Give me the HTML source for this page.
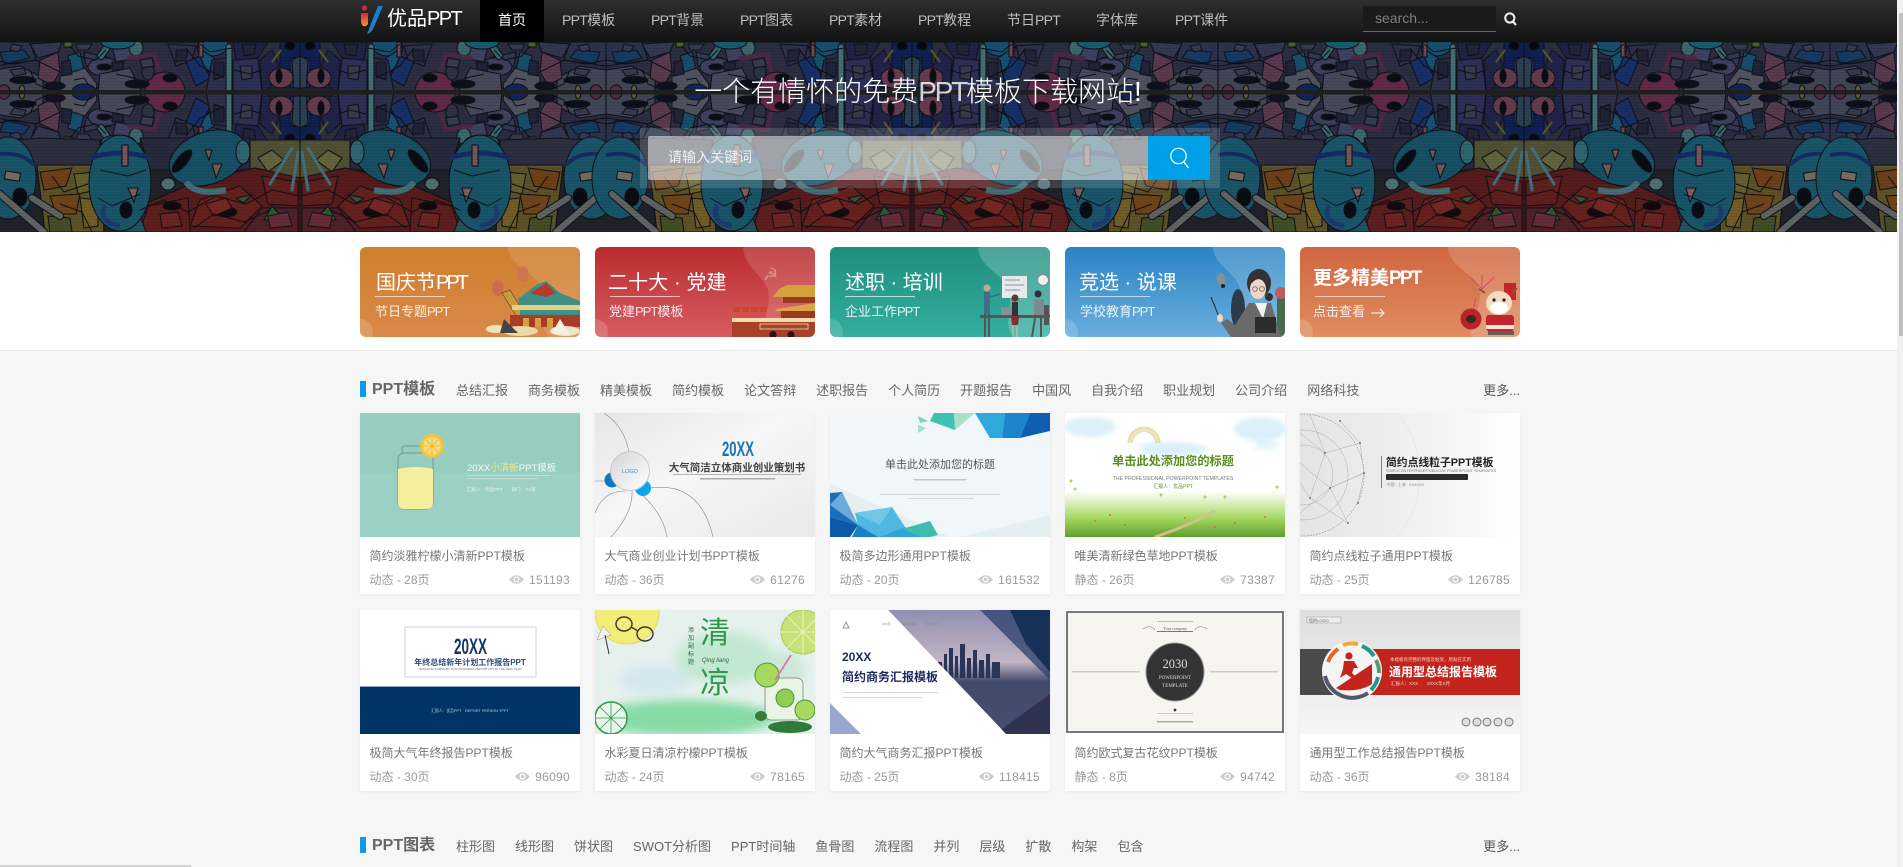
<!DOCTYPE html>
<html lang="zh">
<head>
<meta charset="utf-8">
<title>优品PPT</title>
<style>
*{margin:0;padding:0;box-sizing:border-box}
html,body{width:1903px;height:867px;overflow:hidden;background:#f6f6f6}
body{position:relative;font-family:"Liberation Sans","Noto Sans CJK SC",sans-serif;font-size:12px;color:#666}
a{color:inherit;text-decoration:none}
.abs{position:absolute}
#white{position:absolute;left:0;top:232px;width:1897px;height:119px;background:#fff;border-bottom:1px solid #e8e8e8}
#bg{position:absolute;left:0;top:351px;width:1897px;height:516px;background:#f6f6f6}
#hero{position:absolute;left:0;top:0;width:1897px;height:232px;display:block}
#nav{position:absolute;left:0;top:0;width:1897px;height:42px;background:linear-gradient(#2e2e2e,#131313)}
#nav a.i{position:absolute;top:0;height:42px;line-height:40px;font-size:14px;color:#bdbdbd;white-space:nowrap}
#nav .home{left:480px;width:64px;background:#000;color:#fff!important;text-align:center}
.n{letter-spacing:-.7px}
#logotxt{position:absolute;left:387px;top:5px;font-size:20px;line-height:28px;color:#fff;white-space:nowrap}
#logotxt span{letter-spacing:-1.6px}
#sbox{position:absolute;left:1363px;top:6px;width:133px;height:26px;background:#1a1a1a;border-bottom:1px solid #6a6a6a;color:#808080;font-size:14px;line-height:24px;padding-left:12px}
#title{position:absolute;left:618px;top:68px;width:600px;text-align:center;color:#fff;font-size:28px;line-height:48px;white-space:nowrap;font-weight:300}
#title span{letter-spacing:-2.2px;color:rgba(255,255,255,.8)}
#outer{position:absolute;left:640px;top:128px;width:580px;height:60px;background:rgba(255,255,255,.14)}
#input{position:absolute;left:648px;top:136px;width:500px;height:44px;background:rgba(255,255,255,.5);border-radius:2px 0 0 2px;color:#f2f2f2;font-size:14px;line-height:43px;padding-left:20px}
#btn{position:absolute;left:1148px;top:136px;width:62px;height:44px;background:#00a0e9;border-radius:0 2px 2px 0}
.ban{position:absolute;top:247px;width:220px;height:90px;border-radius:6px;overflow:hidden;color:#fff}
.ban svg{position:absolute;left:0;top:0}
.ban b{position:absolute;left:16px;top:21px;font-size:20px;line-height:30px;font-weight:400;white-space:nowrap}
.ban b span{letter-spacing:-3px}
.ban i{position:absolute;left:15px;top:49px;width:70px;height:1px;background:rgba(255,255,255,.65)}
.ban em{position:absolute;left:15px;top:56px;font-size:13px;line-height:18px;font-style:normal;color:rgba(255,255,255,.88);white-space:nowrap}
.ban em span{letter-spacing:-1px}
.sec{position:absolute;left:360px;width:1160px;height:16px;white-space:nowrap}
.sec:before{content:"";position:absolute;left:0;top:0;width:6px;height:16px;background:#0d9ae6}
.sec h2{position:absolute;left:12px;top:-3px;font-size:16px;line-height:24px;color:#666;font-weight:700}
.sec .tags{position:absolute;left:96px;top:0;display:flex;gap:20px;font-size:13px;line-height:20px;color:#666}
.sec .more{position:absolute;right:0;top:0;font-size:13px;line-height:20px;color:#555}
#grid{position:absolute;left:360px;top:413px;display:grid;grid-template-columns:repeat(5,220px);column-gap:15px;row-gap:16px}
.card{position:relative;width:220px;height:181px;background:#fff;box-shadow:0 1px 3px rgba(0,0,0,.06)}
.card svg.th{display:block;width:220px;height:124px}
.card p{position:absolute;left:9.5px;top:134px;font-size:12px;line-height:18px;color:#777;white-space:nowrap}
.card .m{position:absolute;left:9.5px;top:157.5px;font-size:12px;line-height:18px;color:#999;white-space:nowrap}
.card .v{position:absolute;right:10px;top:157.5px;font-size:12px;line-height:18px;color:#999;letter-spacing:.3px;display:flex;align-items:center;gap:5px}
.card .v svg{width:15px;height:11px}
#sb{position:absolute;left:1897px;top:0;width:6px;height:867px;background:#f1f1f1}
#sbt{position:absolute;left:1899px;top:13px;width:4px;height:323px;background:#c1c1c1}
#hb{position:absolute;left:0;top:865px;width:191px;height:2px;background:#d4d4d4}
</style>
</head>
<body>

<svg id="hero" width="1897" height="232" viewBox="0 0 1897 232">
<defs>
<filter id="bl" x="-30%" y="-30%" width="160%" height="160%"><feGaussianBlur stdDeviation="2.5"/></filter>
<filter id="bm" x="-30%" y="-30%" width="160%" height="160%"><feGaussianBlur stdDeviation="5"/></filter>
<pattern id="sl" width="4" height="3" patternUnits="userSpaceOnUse"><rect width="4" height="1" fill="#000" opacity=".08"/></pattern>
<g id="up" stroke="#14151f" stroke-width="1.1">
<rect x="-6" y="42" width="306" height="50" fill="#3a3b55"/>
<polygon points="-6,70 20,66 43,78 43,92 -6,92" fill="#5b5d74"/>
<polygon points="-6,42 30,42 36,60 -6,66" fill="#3d4266"/>
<polygon points="0,52 24,50 30,58 4,64" fill="#1a4f88"/>
<polygon points="40,60 58,52 60,72 52,85 38,78" fill="#7a4c68"/>
<polygon points="30,44 62,42 58,52 38,58" fill="#45496e"/>
<polygon points="68,56 80,52 84,70 72,74" fill="#1c6a92"/>
<polygon points="60,76 85,68 97,84 96,92 60,92" fill="#6f707f"/>
<polygon points="84,52 110,58 102,68 86,66" fill="#4a4c72"/>
<ellipse cx="23" cy="80" rx="13" ry="3.5" fill="#0e1019"/>
<ellipse cx="55" cy="86" rx="10" ry="4" fill="#12142a"/>
<ellipse cx="4" cy="92" rx="6" ry="7" fill="#7a3a5c"/>
<ellipse cx="22" cy="92" rx="3" ry="7" fill="#8e8230"/>
<ellipse cx="84" cy="92" rx="12" ry="8" fill="#14337a"/>
<ellipse cx="104" cy="67" rx="16" ry="9" fill="#55577c"/>
<ellipse cx="104" cy="67" rx="7" ry="3" fill="#0d0f18"/>
<polygon points="100,74 130,68 142,92 98,92" fill="#62637a"/>
<polygon points="112,46 130,44 135,58 116,62" fill="#555a80"/>
<rect x="100" y="44" width="7" height="16" rx="3" fill="#4f8f96" transform="rotate(35 103 52)"/>
<ellipse cx="136" cy="48" rx="7" ry="8" fill="#4e8f90"/>
<ellipse cx="118" cy="42" rx="17" ry="7" fill="#1c7f97"/>
<ellipse cx="213" cy="44" rx="15" ry="12" fill="#1b6f96"/>
<rect x="64" y="42" width="8" height="5" fill="#6a8a2a"/>
<polyline points="127,58 155,54 160,74" fill="none" stroke="#6c3458" stroke-width="4"/>
<polygon points="168,44 196,46 192,60 176,66" fill="#3d3f5f"/>
<polygon points="186,62 200,56 210,78 196,86" fill="#1c3f8a"/>
<polygon points="196,46 214,58 212,76 204,66" fill="#1c6f9a"/>
<polygon points="212,60 226,58 226,92 206,92" fill="#3d3f64"/>
<path d="M165,72A20,20 0 0 1 185,92L145,92A20,20 0 0 1 165,72Z" fill="#8a3560"/>
<ellipse cx="170" cy="78" rx="7" ry="4" fill="#0d0e16"/>
<ellipse cx="137" cy="84" rx="12" ry="4" fill="#0f111b"/>
<ellipse cx="148" cy="72" rx="6" ry="8" fill="#3e4458"/>
<rect x="199" y="42" width="4" height="15" fill="#a06070"/>
<rect x="226" y="44" width="6" height="48" rx="3" fill="#5a9aa0"/>
<polygon points="233,60 258,58 262,92 233,92" fill="#3c3f70"/>
<polygon points="233,42 268,42 258,58 236,60" fill="#2a2d5c"/>
<polygon points="260,60 272,50 280,68 268,92 262,92" fill="#2c2f60"/>
<rect x="280" y="42" width="20" height="30" fill="#12296e"/>
<ellipse cx="290" cy="46" rx="5" ry="4" fill="#05070f"/>
<rect x="290" y="58" width="10" height="34" fill="#1c3f7e"/>
<polygon points="292,60 300,56 300,92 294,92" fill="#3c5670"/>
<ellipse cx="281" cy="78" rx="12" ry="10" fill="#905068"/>
<ellipse cx="279" cy="76" rx="3" ry="7" fill="#0b0c14"/>
<line x1="272" y1="62" x2="281" y2="50" stroke="#7a7a30" stroke-width="2"/>
<rect x="268" y="88" width="32" height="4" fill="#2d3246"/>
<g fill="#4b4d68"><polygon points="12,44 22,46 18,52 10,50"/><polygon points="76,44 92,44 88,50 78,50"/><polygon points="140,60 152,58 154,66 142,68"/><polygon points="240,66 252,66 252,78 242,80"/><polygon points="10,70 24,68 26,74 14,76"/></g>
<g fill="#2b2d48"><polygon points="62,62 70,60 72,74 62,76"/><polygon points="112,62 124,62 122,70 112,70"/><polygon points="176,50 188,50 186,60 176,62"/><polygon points="214,62 224,62 224,76 214,80"/><polygon points="242,44 256,44 254,54 244,56"/></g>
<g fill="none" stroke="#0f1018" stroke-width="1"><polyline points="-6,60 14,64 36,60 60,72"/><polyline points="70,46 78,56 96,60 106,50"/><polyline points="116,74 134,78 142,92"/><polyline points="186,48 200,66 224,78"/><polyline points="234,70 250,74 262,70"/><polyline points="30,70 36,84 50,90"/><polyline points="74,80 84,78 92,90"/><polyline points="200,44 210,52 232,48"/></g>
</g>
<g id="half">
<rect x="-6" y="142" width="306" height="90" fill="#2c2a34"/>
<use href="#up"/>
<use href="#up" transform="matrix(1 0 0 -1 0 184)"/>
<g stroke="#15141a" stroke-width="1.1">
<polygon points="-6,142 40,138 100,140 100,170 36,170 -6,150" fill="#3d3e52"/>
<polygon points="140,138 250,138 250,170 150,170" fill="#34364e"/>
<polygon points="250,140 300,140 300,178 250,178" fill="#6f6f42"/>
<polygon points="258,158 272,150 284,160 268,172" fill="#8a8a50"/>
<polygon points="37,165 100,165 104,232 45,232" fill="#807030"/>
<polygon points="40,172 72,168 66,186 44,190" fill="#98561e"/>
<polygon points="74,174 96,172 96,190 78,194" fill="#8f8338"/>
<polygon points="50,196 80,194 76,214 56,214" fill="#9c5c1e"/>
<polygon points="80,198 98,200 98,226 84,228" fill="#a0802e"/>
<polygon points="48,216 70,218 72,232 50,232" fill="#5c6b2e"/>
<ellipse cx="8" cy="178" rx="28" ry="41" fill="#20758f"/>
<rect x="5" y="172" width="15" height="8" fill="#a89880" transform="rotate(8 12 176)"/>
<ellipse cx="20" cy="197" rx="7" ry="9" fill="#090c12"/>
<path d="M-6,155Q20,150 34,165" fill="none" stroke="#1a3c86" stroke-width="4"/>
<polygon points="128,232 140,206 200,180 255,168 300,178 300,232" fill="#782220"/>
<polygon points="200,200 240,186 262,206 240,228 190,226" fill="#8e2a22"/>
<polygon points="148,206 188,198 190,232 140,232" fill="#802822"/>
<polygon points="262,176 298,182 298,206 268,204" fill="#852824"/>
<polygon points="262,208 298,208 298,232 244,232" fill="#6f2a30"/>
<ellipse cx="226" cy="212" rx="11" ry="5" fill="#1a0808"/>
<ellipse cx="172" cy="206" rx="9" ry="4" fill="#1a0808"/>
<polygon points="272,206 285,220 264,220" fill="#3f7a3a"/>
<polygon points="236,198 252,195 243,203" fill="#3f7a3a"/>
<polygon points="124,222 140,216 146,232 120,232" fill="#2f7280"/>
<ellipse cx="120" cy="183" rx="31" ry="48" fill="#20758f"/>
<path d="M90,158Q120,148 150,158" fill="none" stroke="#1a3c86" stroke-width="5"/>
<rect x="122" y="145" width="6" height="21" fill="#a8757a"/>
<polygon points="128,188 138,188 134,202" fill="#b08080"/>
<ellipse cx="126" cy="210" rx="6" ry="8" fill="#0a0d14"/>
<path d="M105,205Q98,222 120,226" fill="none" stroke="#24509a" stroke-width="5"/>
<ellipse cx="208" cy="158" rx="40" ry="26" transform="rotate(-20 208 158)" fill="#1e6d88"/>
<ellipse cx="182" cy="161" rx="5" ry="14" transform="rotate(40 182 161)" fill="#090c12"/>
<polygon points="205,150 212,150 209,160" fill="#a87878"/>
<polygon points="212,164 222,164 216,178" fill="#a87878"/>
<ellipse cx="243" cy="152" rx="7" ry="12" fill="#3f8a9a"/>
<ellipse cx="168" cy="184" rx="7" ry="6" fill="#6e9aa0"/>
<path d="M186,182Q196,196 226,190" fill="none" stroke="#5a9aa0" stroke-width="6"/>
<polygon points="206,204 226,198 232,208 214,216" fill="#a5332a"/>
<polygon points="268,216 288,212 292,226 270,228" fill="#8e3a48"/>
<polygon points="160,214 178,212 182,226 162,228" fill="#9a2e26"/>
</g>
<g fill="none" stroke="#14100f" stroke-width="1"><polyline points="140,210 164,200 188,212 216,196 246,204 272,190 300,196"/><polyline points="194,228 214,214 244,222 270,210"/><polyline points="52,176 64,192 88,184"/><polyline points="60,204 82,212 92,232"/><polyline points="100,170 128,176 146,170"/><polyline points="98,198 112,206 140,194"/></g>
<g fill="none" stroke-linecap="round">
<line x1="0" y1="194" x2="44" y2="232" stroke="#14161c" stroke-width="8"/>
<line x1="0" y1="194" x2="44" y2="232" stroke="#858985" stroke-width="6"/>
<line x1="32" y1="198" x2="60" y2="216" stroke="#14161c" stroke-width="8"/>
<line x1="32" y1="198" x2="60" y2="216" stroke="#858985" stroke-width="6"/>
<line x1="292" y1="148" x2="270" y2="184" stroke="#5a9aa8" stroke-width="3"/>
<line x1="298" y1="152" x2="292" y2="190" stroke="#5a9aa8" stroke-width="3"/>
</g>
</g>
<g id="tile"><use href="#half"/><use href="#half" transform="matrix(-1 0 0 1 600 0)"/></g>
</defs>
<use href="#tile"/>
<use href="#tile" x="612"/>
<use href="#tile" x="1224"/>
<use href="#tile" x="1836"/>
<rect x="0" y="42" width="1897" height="190" fill="#0a0c14" opacity=".3"/>
<rect x="0" y="42" width="1897" height="190" fill="url(#sl)"/>
<rect x="0" y="90" width="1897" height="4.5" fill="#1f1f1f"/>
</svg>

<div id="white"></div>
<div id="bg"></div>

<div id="nav">
<a class="i home" href="#">首页</a>
<a class="i" style="left:562px" href="#"><span class="n">PPT</span>模板</a>
<a class="i" style="left:651px" href="#"><span class="n">PPT</span>背景</a>
<a class="i" style="left:740px" href="#"><span class="n">PPT</span>图表</a>
<a class="i" style="left:829px" href="#"><span class="n">PPT</span>素材</a>
<a class="i" style="left:918px" href="#"><span class="n">PPT</span>教程</a>
<a class="i" style="left:1007px" href="#">节日<span class="n">PPT</span></a>
<a class="i" style="left:1096px" href="#">字体库</a>
<a class="i" style="left:1175px" href="#"><span class="n">PPT</span>课件</a>
</div>
<svg class="abs" style="left:360px;top:5px" width="23" height="29" viewBox="0 0 23 29">
<defs><linearGradient id="lg" x1="0" y1="0" x2="0" y2="1"><stop offset="0" stop-color="#d8243c"/><stop offset="1" stop-color="#e89a2c"/></linearGradient></defs>
<circle cx="4.5" cy="3" r="2.6" fill="#d8243c"/>
<path d="M1,8L8,8L8,19Q6,22 3,21Q1,19 1,15Z" fill="url(#lg)"/>
<path d="M18,1L23,1L13,24Q11,28 7,29Q9,25 10,21Z" fill="#1b7fd0"/>
</svg>
<div id="logotxt">优品<span>PPT</span></div>
<div id="sbox">search...</div>
<svg class="abs" style="left:1503px;top:11px" width="15" height="16" viewBox="0 0 15 16"><circle cx="6.8" cy="7" r="4.6" fill="none" stroke="#eee" stroke-width="2"/><line x1="10" y1="10.6" x2="13" y2="14" stroke="#eee" stroke-width="2.2"/></svg>

<div id="title">一个有情怀的免费<span>PPT</span>模板下载网站!</div>
<div id="outer"></div>
<div id="input">请输入关键词</div>
<div id="btn"><svg class="abs" style="left:21px;top:10px" width="22" height="24" viewBox="0 0 22 24"><circle cx="9.5" cy="10" r="7.7" fill="none" stroke="#fff" stroke-width="1.2"/><line x1="15" y1="16" x2="19.5" y2="22" stroke="#fff" stroke-width="1.4"/></svg></div>

<!-- banners -->
<div class="ban" style="left:360px;background:linear-gradient(#cf7f2c,#d9894a)">
<svg width="220" height="90"><path d="M148,0C148,22 185,28 185,50C185,70 178,80 190,90L220,90L220,0Z" fill="#fff" opacity=".12"/><circle cx="0" cy="85" r="13" fill="#fff" opacity=".16"/>
<ellipse cx="138" cy="41" rx="5.5" ry="8" fill="#cd6a52"/><ellipse cx="163" cy="27" rx="5.5" ry="8" fill="#cf7258"/>
<polygon points="142,46 150,43 168,72 160,75" fill="#c99a3e" stroke="#5a3a20" stroke-width=".6"/><polygon points="158,52 176,38 186,34 200,46 220,54 220,60 160,60" fill="#3f8f82"/><polygon points="170,46 186,36 196,46 186,50" fill="#b43a2c"/>
<rect x="152" y="58" width="68" height="5" fill="#e4cf86"/><rect x="160" y="63" width="60" height="5" fill="#3f8f82"/><rect x="150" y="68" width="70" height="12" fill="#a83c28"/><g fill="#d7a03e"><rect x="163" y="71" width="6" height="9"/><rect x="175" y="71" width="6" height="9"/><rect x="187" y="71" width="6" height="9"/></g>
<ellipse cx="136" cy="82" rx="10" ry="4" fill="#efe3b8"/><ellipse cx="160" cy="84" rx="18" ry="5" fill="#e9d9a6"/><ellipse cx="205" cy="84" rx="15" ry="5" fill="#efe6c8"/><polygon points="200,72 210,88 192,86" fill="#f6f1e0"/><polygon points="144,72 158,86 140,86" fill="#444"/></svg>
<b>国庆节<span>PPT</span></b><i></i><em>节日专题<span>PPT</span></em></div>

<div class="ban" style="left:595px;background:linear-gradient(#b92c2e,#d75c60)">
<svg width="220" height="90"><path d="M148,0C150,24 174,30 174,50C174,64 166,72 176,90L220,90L220,0Z" fill="#fff" opacity=".14"/><circle cx="0" cy="85" r="13" fill="#fff" opacity=".16"/>
<text x="168" y="33" font-size="17" fill="#fff" opacity=".35" font-family="DejaVu Sans">☭</text>
<g fill="#c6482a"><polygon points="138,60 145,60 145,65 138,65"/><polygon points="147,60 154,60 154,65 147,65"/><polygon points="156,60 163,60 163,65 156,65"/><polygon points="165,60 172,60 172,65 165,65"/></g>
<polygon points="184,42 192,38 220,38 220,50 178,50" fill="#d7a03e"/><rect x="188" y="50" width="32" height="6" fill="#9a3a22"/><polygon points="182,62 220,56 220,64 180,64" fill="#dca648"/><rect x="186" y="64" width="34" height="7" fill="#9a3a22"/>
<rect x="137" y="71" width="83" height="4" fill="#f2dcae"/><rect x="137" y="75" width="83" height="15" fill="#a8412a"/><rect x="165" y="77" width="48" height="5" fill="none" stroke="#f2dcae" stroke-width=".8"/><ellipse cx="178" cy="88" rx="3.5" ry="4" fill="#2a1512"/><ellipse cx="196" cy="88" rx="3.5" ry="4" fill="#2a1512"/></svg>
<b style="left:13px;letter-spacing:.1px">二十大 · 党建</b><i></i><em style="left:14px">党建<span>PPT</span>模板</em></div>

<div class="ban" style="left:830px;background:linear-gradient(#1f8e7e,#33ae9f)">
<svg width="220" height="90"><path d="M148,0C148,22 180,28 180,50C180,70 174,80 184,90L220,90L220,0Z" fill="#fff" opacity=".2"/><circle cx="0" cy="85" r="13" fill="#fff" opacity=".16"/>
<rect x="172" y="29" width="25" height="22" fill="#e6eaec"/><g stroke="#8a97a0"><line x1="175" y1="33" x2="190" y2="33"/><line x1="175" y1="38" x2="194" y2="38"/><line x1="175" y1="43" x2="190" y2="43"/></g><circle cx="213" cy="33" r="5.5" fill="#f0f0f0" stroke="#888"/>
<rect x="150" y="68" width="70" height="3" fill="#555"/>
<circle cx="157" cy="41" r="3.5" fill="#c9a58a"/><rect x="154" y="45" width="6" height="22" fill="#3f6d8a"/><line x1="155" y1="67" x2="155" y2="90" stroke="#555" stroke-width="2"/><line x1="159" y1="67" x2="159" y2="90" stroke="#555" stroke-width="2"/><line x1="160" y1="50" x2="170" y2="47" stroke="#3f6d8a" stroke-width="1.5"/>
<circle cx="185" cy="51" r="3.5" fill="#5a3a2a"/><rect x="182" y="55" width="6" height="14" fill="#333"/><polygon points="181,69 189,69 188,78 182,78" fill="#8f2a2a"/><line x1="183" y1="78" x2="183" y2="90" stroke="#e0c0a8"/><line x1="187" y1="78" x2="187" y2="90" stroke="#e0c0a8"/><rect x="171" y="60" width="11" height="8" fill="#8a8f96"/>
<circle cx="208" cy="47" r="3.5" fill="#2a3040"/><rect x="204" y="52" width="10" height="16" fill="#7f8a90"/><rect x="214" y="58" width="5" height="20" fill="#555"/><line x1="205" y1="71" x2="202" y2="90" stroke="#555" stroke-width="2"/><line x1="211" y1="71" x2="211" y2="90" stroke="#555" stroke-width="2"/></svg>
<b style="left:15px">述职 · 培训</b><i></i><em>企业工作<span>PPT</span></em></div>

<div class="ban" style="left:1065px;background:linear-gradient(#2a83c4,#6aaede)">
<svg width="220" height="90"><path d="M148,0C148,20 176,26 176,48C176,66 168,80 176,90L220,90L220,0Z" fill="#fff" opacity=".18"/><circle cx="0" cy="85" r="13" fill="#fff" opacity=".16"/>
<ellipse cx="156" cy="32" rx="4.5" ry="6" fill="#8a8f94"/><circle cx="158" cy="39" r="2" fill="#222"/>
<ellipse cx="173" cy="62" rx="7" ry="20" fill="#2c3a4a"/><line x1="146" y1="50" x2="154" y2="70" stroke="#222"/>
<polygon points="212,50 220,42 220,90 212,90" fill="#4a6a4c"/><circle cx="216" cy="46" r="6" fill="#c25a5a"/>
<polygon points="184,56 206,56 216,90 166,90 156,76 162,72 170,78" fill="#6a6a6a"/><polygon points="190,56 202,56 198,72" fill="#f2f2f2"/><rect x="190" y="70" width="21" height="16" fill="#2c2c2c"/>
<ellipse cx="194" cy="36" rx="12" ry="14" fill="#333"/><ellipse cx="193" cy="42" rx="8" ry="10" fill="#f3d6c6"/><ellipse cx="204" cy="50" rx="4" ry="4" fill="#333"/><path d="M187,36Q194,28 202,36L202,30Q194,24 186,30Z" fill="#333"/><circle cx="190" cy="42" r="2.4" fill="none" stroke="#777"/><circle cx="197" cy="42" r="2.4" fill="none" stroke="#777"/><ellipse cx="155" cy="71" rx="3" ry="4" fill="#f3d6c6"/></svg>
<b style="left:14px">竞选 · 说课</b><i></i><em>学校教育<span>PPT</span></em></div>

<div class="ban" style="left:1300px;background:linear-gradient(#d06640,#e08c60)">
<svg width="220" height="90"><path d="M148,0C148,22 180,26 180,48C180,66 166,78 172,90L220,90L220,0Z" fill="#fff" opacity=".16"/><circle cx="0" cy="85" r="13" fill="#fff" opacity=".16"/>
<g stroke="#d94a6a" stroke-width="1"><line x1="182" y1="42" x2="170" y2="30"/><line x1="182" y1="42" x2="182" y2="28"/><line x1="182" y1="42" x2="194" y2="30"/><line x1="176" y1="50" x2="172" y2="68"/></g>
<rect x="204" y="36" width="12" height="17" fill="#c2252c"/>
<circle cx="171" cy="72" r="10.5" fill="#b8242c"/><ellipse cx="171" cy="72" rx="5" ry="4" fill="#3a2a1a"/>
<rect x="186" y="68" width="28" height="16" rx="3" fill="#c2252c"/><rect x="186" y="78" width="28" height="4" fill="#f4e6d0"/>
<ellipse cx="199" cy="56" rx="13" ry="12" fill="#f3dcc0"/><ellipse cx="199" cy="61" rx="9" ry="6" fill="#fff"/><circle cx="194" cy="53" r="1.6" fill="#222"/><circle cx="204" cy="53" r="1.6" fill="#222"/><path d="M185,46L179,42M213,46L217,41" stroke="#8a5a2a" stroke-width="2"/>
<rect x="188" y="84" width="26" height="4" fill="#6a5a52"/></svg>
<b style="top:17px;left:13px;font-weight:700;font-size:19px">更多精美<span style="letter-spacing:-1.8px">PPT</span></b><i></i><em style="left:13px">点击查看<svg width="16" height="10" style="position:absolute;left:57px;top:5px"><path d="M1,5H14M10,1L14,5L10,9" fill="none" stroke="#fff" stroke-width="1"/></svg></em></div>

<!-- section header 1 -->
<div class="sec" style="top:381px">
<h2>PPT模板</h2>
<div class="tags"><a>总结汇报</a><a>商务模板</a><a>精美模板</a><a>简约模板</a><a>论文答辩</a><a>述职报告</a><a>个人简历</a><a>开题报告</a><a>中国风</a><a>自我介绍</a><a>职业规划</a><a>公司介绍</a><a>网络科技</a></div>
<a class="more">更多...</a>
</div>

<div id="grid">

<div class="card">
<svg class="th" viewBox="0 0 220 124"><rect width="220" height="124" fill="#97cdbf"/><rect x="0" y="60" width="220" height="64" fill="#9bd0c4"/>
<rect x="42" y="33" width="27" height="7" rx="2" fill="none" stroke="#6f9a90"/><rect x="38" y="40" width="35" height="56" rx="6" fill="none" stroke="#6f9a90"/><path d="M38,56Q55,52 73,56V90Q73,96 67,96H44Q38,96 38,90Z" fill="#f5ee9c"/>
<circle cx="72" cy="33" r="12" fill="#f0c33d"/><circle cx="72" cy="33" r="9" fill="#f7dc7a"/><path d="M72,24V42M63,33H81M66,27L78,39M78,27L66,39" stroke="#e6b22a" stroke-width=".7"/>
<text x="107" y="58" font-size="9.5" fill="#f1fbf6">20XX<tspan fill="#f0e888">小清新</tspan>PPT模板</text>
<rect x="107" y="62" width="84" height=".7" fill="#cfe8df"/><rect x="107" y="65" width="70" height=".7" fill="#cfe8df"/>
<text x="107" y="78" font-size="4.5" fill="#e6f5ef">汇报人：优品PPT　　部门：XX部</text></svg>
<p>简约淡雅柠檬小清新PPT模板</p><div class="m">动态 - 28页</div><div class="v"><svg viewBox="0 0 15 11"><path d="M0,5.5Q7.5,-3 15,5.5Q7.5,14 0,5.5Z" fill="#ccc"/><circle cx="7.5" cy="5.5" r="3" fill="#fff"/><circle cx="7.5" cy="5.5" r="1.8" fill="#ccc"/></svg>151193</div>
</div>

<div class="card">
<svg class="th" viewBox="0 0 220 124"><defs><linearGradient id="b2" x1="0" y1="0" x2="1" y2="1"><stop offset="0" stop-color="#e6e6e7"/><stop offset=".45" stop-color="#f6f6f6"/><stop offset="1" stop-color="#e9e9ea"/></linearGradient><linearGradient id="b3" x1="0" y1="0" x2="1" y2="1"><stop offset="0" stop-color="#d4d4d6"/><stop offset="1" stop-color="#fff"/></linearGradient></defs><rect width="220" height="124" fill="url(#b2)"/>
<g fill="none" stroke="#888" stroke-width=".6"><path d="M9,0Q30,14 34,40"/><path d="M0,68H18"/><path d="M0,100Q8,78 30,78"/><path d="M16,124Q38,100 37,78"/><path d="M45,80Q68,100 72,124"/><path d="M55,75Q105,68 118,124"/></g>
<circle cx="17" cy="67" r="7.5" fill="#0b77c5"/><circle cx="48" cy="75" r="8" fill="#0aa5ea"/><circle cx="35" cy="58" r="20" fill="#c9c9cb"/><circle cx="35" cy="58" r="19" fill="url(#b3)"/><text x="35" y="60" font-size="5.5" fill="#3f8fd0" text-anchor="middle">LOGO</text>
<text x="127" y="43" font-size="21" font-weight="700" fill="#1b74bd" textLength="32" lengthAdjust="spacingAndGlyphs">20XX</text><text x="142" y="58" font-size="10.5" font-weight="700" fill="#444" text-anchor="middle">大气简洁立体商业创业策划书</text><rect x="78" y="61" width="128" height=".7" fill="#999"/><rect x="105" y="65" width="75" height="1.5" fill="#aaa"/></svg>
<p>大气商业创业计划书PPT模板</p><div class="m">动态 - 36页</div><div class="v"><svg viewBox="0 0 15 11"><path d="M0,5.5Q7.5,-3 15,5.5Q7.5,14 0,5.5Z" fill="#ccc"/><circle cx="7.5" cy="5.5" r="3" fill="#fff"/><circle cx="7.5" cy="5.5" r="1.8" fill="#ccc"/></svg>61276</div>
</div>

<div class="card">
<svg class="th" viewBox="0 0 220 124"><rect width="220" height="124" fill="#f0f6f9"/><polygon points="0,71 120,124 0,124" fill="#e6eff0"/><polygon points="130,124 220,102 220,124" fill="#e6eff0"/>
<polygon points="104,0 124,0 125,17 100,8" fill="#3fc0b0"/><polygon points="124,0 145,0 125,17" fill="#a8e0c8"/><polygon points="145,0 175,0 172,25 160,25" fill="#2fa8dc"/><polygon points="175,0 200,0 190,25 172,25" fill="#1b86cc"/><polygon points="200,0 220,0 220,18 190,25" fill="#0e5fb0"/>
<polygon points="88,3 98,8 90,10" fill="#7fd0c0"/><polygon points="88,12 96,15 88,20" fill="#9fe0d0"/>
<polygon points="0,80 12,79 28,112 0,104" fill="#1a70b8"/><polygon points="0,104 28,112 20,124 0,124" fill="#0e58a8"/><polygon points="12,79 28,112 0,92" fill="#6faadc"/><polygon points="28,112 25,100 62,94 75,114 48,124 22,124" fill="#4fb8e0"/><polygon points="25,100 62,94 50,112" fill="#6fc8e8"/><polygon points="22,124 28,112 48,124" fill="#1b7fc8"/><polygon points="75,114 92,124 48,124" fill="#2fa4d8"/><polygon points="72,116 100,108 108,122 100,124 92,124" fill="#3fbcae"/>
<text x="110" y="55" font-size="11" fill="#555" text-anchor="middle">单击此处添加您的标题</text><rect x="84" y="66" width="52" height="1.5" fill="#c4c4c4"/><rect x="50" y="81" width="120" height=".8" fill="#d0d0d0"/><rect x="78" y="85" width="66" height=".8" fill="#d0d0d0"/></svg>
<p>极简多边形通用PPT模板</p><div class="m">动态 - 20页</div><div class="v"><svg viewBox="0 0 15 11"><path d="M0,5.5Q7.5,-3 15,5.5Q7.5,14 0,5.5Z" fill="#ccc"/><circle cx="7.5" cy="5.5" r="3" fill="#fff"/><circle cx="7.5" cy="5.5" r="1.8" fill="#ccc"/></svg>161532</div>
</div>

<div class="card">
<svg class="th" viewBox="0 0 220 124"><defs><linearGradient id="g5" x1="0" y1="0" x2="0" y2="1"><stop offset="0" stop-color="#fff"/><stop offset=".3" stop-color="#d4ecae"/><stop offset=".6" stop-color="#a4d65e"/><stop offset="1" stop-color="#5f9e2c"/></linearGradient></defs><rect width="220" height="124" fill="#fff"/>
<g filter="url(#bl)" fill="#dcf0f9"><ellipse cx="25" cy="14" rx="26" ry="10"/><ellipse cx="195" cy="16" rx="26" ry="12"/><ellipse cx="105" cy="36" rx="38" ry="7"/><ellipse cx="195" cy="32" rx="20" ry="5" fill="#e6f4fa"/></g><g fill="#fff" filter="url(#bl)"><ellipse cx="60" cy="38" rx="18" ry="8"/><ellipse cx="170" cy="34" rx="22" ry="8"/></g><path d="M64,30A15,15 0 0 1 94,30" fill="none" stroke="#f5d8a8" stroke-width="3"/><path d="M67,30A12,12 0 0 1 91,30" fill="none" stroke="#cfe8b8" stroke-width="2"/>
<rect y="78" width="220" height="46" fill="url(#g5)"/><path d="M90,124Q125,112 150,98" fill="none" stroke="#cfc28a" stroke-width="3"/><g fill="#e86a4a"><circle cx="30" cy="108" r="1"/><circle cx="60" cy="112" r="1"/><circle cx="120" cy="105" r="1"/><circle cx="170" cy="110" r="1"/><circle cx="200" cy="104" r="1"/><circle cx="45" cy="102" r="1"/><circle cx="150" cy="114" r="1"/></g><g fill="#a8d468"><circle cx="6" cy="68" r="1.5"/><circle cx="10" cy="76" r="1.5"/><circle cx="96" cy="82" r="1.5"/><circle cx="140" cy="84" r="1.5"/><circle cx="160" cy="84" r="1.5"/><circle cx="212" cy="74" r="1.5"/></g>
<text x="108" y="52" font-size="12.2" font-weight="700" fill="#5a8f1f" text-anchor="middle">单击此处添加您的标题</text><text x="108" y="67" font-size="5.2" fill="#777" text-anchor="middle">THE PROFESSIONAL POWERPOINT TEMPLATES</text><text x="108" y="75" font-size="5" fill="#5a8f1f" text-anchor="middle">汇报人：优品PPT</text></svg>
<p>唯美清新绿色草地PPT模板</p><div class="m">静态 - 26页</div><div class="v"><svg viewBox="0 0 15 11"><path d="M0,5.5Q7.5,-3 15,5.5Q7.5,14 0,5.5Z" fill="#ccc"/><circle cx="7.5" cy="5.5" r="3" fill="#fff"/><circle cx="7.5" cy="5.5" r="1.8" fill="#ccc"/></svg>73387</div>
</div>

<div class="card">
<svg class="th" viewBox="0 0 220 124"><defs><linearGradient id="g6"><stop offset="0" stop-color="#e4e4e4"/><stop offset=".55" stop-color="#f1f1f1"/><stop offset="1" stop-color="#fff"/></linearGradient></defs><rect width="220" height="124" fill="url(#g6)"/>
<g fill="none" stroke="#aaa" stroke-width=".5"><circle cx="3" cy="62" r="61" stroke="#666" stroke-dasharray="1.5 1.5"/><circle cx="3" cy="62" r="45"/><circle cx="3" cy="62" r="30"/><path d="M10,2L25,40L60,30L64,60L30,75L48,110L10,85L25,40M0,50L30,75L0,100M60,30L40,8M64,60L58,90M25,40L0,20M30,75L64,60M10,85L0,70"/><circle cx="25" cy="62" r="95" stroke="#ddd"/></g>
<g fill="#555"><circle cx="25" cy="40" r=".9"/><circle cx="60" cy="30" r=".9"/><circle cx="30" cy="75" r=".9"/><circle cx="48" cy="110" r=".9"/><circle cx="64" cy="60" r=".9"/><circle cx="10" cy="85" r=".9"/><circle cx="40" cy="8" r=".9"/><circle cx="58" cy="90" r=".9"/></g>
<rect x="81" y="43" width=".7" height="32" fill="#555"/><text x="86" y="53" font-size="10.8" font-weight="700" fill="#222">简约点线粒子PPT模板</text><text x="86" y="59" font-size="3.8" fill="#777">SIMPLE ENTERPRISE PUBLICIZE POWERPOINT TEMPLATES</text><rect x="86" y="61" width="82" height="6" rx="1" fill="#2a2a2a"/><text x="87" y="73" font-size="3.8" fill="#888">中国 · 上海 · XXXXXX</text></svg>
<p>简约点线粒子通用PPT模板</p><div class="m">动态 - 25页</div><div class="v"><svg viewBox="0 0 15 11"><path d="M0,5.5Q7.5,-3 15,5.5Q7.5,14 0,5.5Z" fill="#ccc"/><circle cx="7.5" cy="5.5" r="3" fill="#fff"/><circle cx="7.5" cy="5.5" r="1.8" fill="#ccc"/></svg>126785</div>
</div>

<div class="card">
<svg class="th" viewBox="0 0 220 124"><rect width="220" height="124" fill="#fff"/><rect y="77" width="220" height="47" fill="#003366"/><rect y="76" width="220" height="1" fill="#8ea2c0"/><rect x="45" y="17" width="131" height="50" fill="#fff" stroke="#cdd5e2"/>
<text x="94" y="44" font-size="22" font-weight="700" fill="#14366e" textLength="33" lengthAdjust="spacingAndGlyphs">20XX</text><text x="110" y="55" font-size="8" font-weight="700" fill="#2c4a7c" text-anchor="middle">年终总结新年计划工作报告PPT</text><text x="110" y="60" font-size="3" fill="#5a6f96" text-anchor="middle">YEAR-END SUMMARY PLAN BUSINESS REPORT PPT IN THE NEW YEAR</text><text x="110" y="102" font-size="3.8" fill="#c0cee0" text-anchor="middle">汇报人：优品PPT　REPORT PERSON YPPT</text></svg>
<p>极简大气年终报告PPT模板</p><div class="m">动态 - 30页</div><div class="v"><svg viewBox="0 0 15 11"><path d="M0,5.5Q7.5,-3 15,5.5Q7.5,14 0,5.5Z" fill="#ccc"/><circle cx="7.5" cy="5.5" r="3" fill="#fff"/><circle cx="7.5" cy="5.5" r="1.8" fill="#ccc"/></svg>96090</div>
</div>

<div class="card">
<svg class="th" viewBox="0 0 220 124"><rect width="220" height="124" fill="#e6f1ee"/><g filter="url(#bm)"><ellipse cx="90" cy="108" rx="90" ry="18" fill="#86dba4"/><ellipse cx="130" cy="48" rx="50" ry="26" fill="#c2e8d2"/><ellipse cx="60" cy="70" rx="36" ry="14" fill="#d4e6ee"/><ellipse cx="190" cy="60" rx="20" ry="20" fill="#cde8da"/></g>
<circle cx="32" cy="2" r="32" fill="#f2ec78" stroke="#e0d860"/><g fill="none" stroke="#3a3a2a" stroke-width="1.4"><ellipse cx="29" cy="14" rx="8" ry="7"/><ellipse cx="50" cy="24" rx="8" ry="7"/><line x1="36" y1="17" x2="43" y2="21"/></g><path d="M2,30L16,25L8,16Z" fill="#f4f4ec" stroke="#888" stroke-width=".5"/><line x1="10" y1="25" x2="14" y2="44" stroke="#333"/>
<circle cx="208" cy="22" r="22" fill="#c8e27a" stroke="#a8cc50"/><path d="M208,0V44M186,22H230M192,6L224,38M224,6L192,38" stroke="#e8f4b8" stroke-width="1"/>
<text x="120" y="33" font-size="30" fill="#2f9a4a" text-anchor="middle">清</text><text x="120" y="83" font-size="30" fill="#2f9a4a" text-anchor="middle">凉</text><text x="96" y="22" font-size="6" fill="#2a6a3a" text-anchor="middle">添</text><text x="96" y="30" font-size="6" fill="#2a6a3a" text-anchor="middle">加</text><text x="96" y="38" font-size="6" fill="#2a6a3a" text-anchor="middle">副</text><text x="96" y="46" font-size="6" fill="#2a6a3a" text-anchor="middle">标</text><text x="96" y="54" font-size="6" fill="#2a6a3a" text-anchor="middle">题</text>
<text x="107" y="52" font-size="6" font-style="italic" fill="#2a6a3a">Qing liang</text>
<circle cx="16" cy="108" r="16" fill="#e8f6ec" stroke="#2f9a4a" stroke-width="1.5"/><path d="M16,92V124M0,108H32M5,97L27,119M27,97L5,119" stroke="#2f9a4a" stroke-width=".8"/>
<rect x="170" y="68" width="38" height="42" rx="6" fill="#e8f4e4" stroke="#777" stroke-width=".7"/><circle cx="172" cy="65" r="12" fill="#a8d860" stroke="#4a9a30"/><circle cx="210" cy="100" r="10" fill="#a8d860" stroke="#4a9a30"/><circle cx="190" cy="88" r="9" fill="#8fce50" stroke="#4a9a30"/><line x1="180" y1="70" x2="196" y2="45" stroke="#d080a8" stroke-width="2"/><ellipse cx="195" cy="117" rx="22" ry="6" fill="#2f7a3a"/><ellipse cx="166" cy="106" rx="6" ry="5" fill="#3a7a3a"/></svg>
<p>水彩夏日清凉柠檬PPT模板</p><div class="m">动态 - 24页</div><div class="v"><svg viewBox="0 0 15 11"><path d="M0,5.5Q7.5,-3 15,5.5Q7.5,14 0,5.5Z" fill="#ccc"/><circle cx="7.5" cy="5.5" r="3" fill="#fff"/><circle cx="7.5" cy="5.5" r="1.8" fill="#ccc"/></svg>78165</div>
</div>

<div class="card">
<svg class="th" viewBox="0 0 220 124"><defs><linearGradient id="g8" x1="0" y1="0" x2="0" y2="1"><stop offset="0" stop-color="#8f8fb0"/><stop offset=".42" stop-color="#c4b4c4"/><stop offset=".58" stop-color="#3f4a6a"/><stop offset="1" stop-color="#4a4d70"/></linearGradient></defs><rect width="220" height="124" fill="#fff"/><polygon points="58,0 220,0 220,124 176,124" fill="url(#g8)"/>
<polygon points="150,0 220,0 220,70" fill="#2a3f6e" opacity=".75"/><g fill="#2a3658"><rect x="104" y="52" width="8" height="16"/><rect x="114" y="44" width="3" height="24"/><rect x="119" y="38" width="4" height="30"/><rect x="125" y="46" width="3" height="22"/><rect x="130" y="34" width="5" height="34"/><rect x="137" y="48" width="4" height="20"/><rect x="143" y="40" width="4" height="28"/><rect x="149" y="50" width="5" height="18"/><rect x="156" y="44" width="4" height="24"/><rect x="162" y="52" width="8" height="16"/></g><polygon points="180,0 220,0 220,62 196,34" fill="#16305a"/><polygon points="165,124 220,84 220,124" fill="#2f3350"/><polygon points="0,0 58,0 176,124 0,124" fill="#fff"/>
<polygon points="0,93 31,124 0,124" fill="#98a6d0"/><text x="12" y="51" font-size="12" font-weight="700" fill="#1c2a5c">20XX</text><text x="12" y="71" font-size="12" font-weight="700" fill="#1c2a5c">简约商务汇报模板</text><rect x="12" y="82" width="96" height=".8" fill="#ccc"/><rect x="12" y="87" width="80" height=".8" fill="#ccc"/><polygon points="13,18 16,12 19,18" fill="none" stroke="#999"/><g fill="#888" font-size="3"><text x="52" y="15">2XX页</text><text x="74" y="15">年度回顾</text><text x="96" y="15">项目分析</text></g></svg>
<p>简约大气商务汇报PPT模板</p><div class="m">动态 - 25页</div><div class="v"><svg viewBox="0 0 15 11"><path d="M0,5.5Q7.5,-3 15,5.5Q7.5,14 0,5.5Z" fill="#ccc"/><circle cx="7.5" cy="5.5" r="3" fill="#fff"/><circle cx="7.5" cy="5.5" r="1.8" fill="#ccc"/></svg>118415</div>
</div>

<div class="card">
<svg class="th" viewBox="0 0 220 124"><rect x="2" y="2" width="216" height="120" fill="#f6f5ef" stroke="#777" stroke-width="2"/><rect x="7" y="61" width="68" height="1.5" fill="#ccccc2"/><rect x="145" y="61" width="68" height="1.5" fill="#ccccc2"/>
<circle cx="110" cy="62" r="29" fill="#333" stroke="#999"/><text x="110" y="58" font-size="12.5" fill="#ddd" text-anchor="middle" font-family="Liberation Serif">2030</text><text x="110" y="69" font-size="5" fill="#ddd" text-anchor="middle" font-family="Liberation Serif">POWERPOINT</text><text x="110" y="77" font-size="5" fill="#ddd" text-anchor="middle" font-family="Liberation Serif">TEMPLATE</text>
<text x="110" y="20" font-size="4" fill="#555" text-anchor="middle" font-family="Liberation Serif">Your company</text><rect x="92" y="21" width="36" height="1" fill="#777"/><rect x="92" y="11" width="36" height=".6" fill="#999"/><g fill="none" stroke="#888" stroke-width=".6"><path d="M78,19Q86,14 90,20"/><path d="M142,19Q134,14 130,20"/></g><rect x="92" y="103" width="36" height=".6" fill="#aaa"/><rect x="92" y="111" width="36" height="1.5" fill="#aaa"/><circle cx="110" cy="100" r="1.4" fill="#333"/></svg>
<p>简约欧式复古花纹PPT模板</p><div class="m">静态 - 8页</div><div class="v"><svg viewBox="0 0 15 11"><path d="M0,5.5Q7.5,-3 15,5.5Q7.5,14 0,5.5Z" fill="#ccc"/><circle cx="7.5" cy="5.5" r="3" fill="#fff"/><circle cx="7.5" cy="5.5" r="1.8" fill="#ccc"/></svg>94742</div>
</div>

<div class="card">
<svg class="th" viewBox="0 0 220 124"><defs><linearGradient id="g10" x1="0" y1="0" x2="0" y2="1"><stop offset="0" stop-color="#dedede"/><stop offset="1" stop-color="#f6f6f6"/></linearGradient></defs><rect width="220" height="124" fill="url(#g10)"/><rect x="7" y="7" width="34" height="6" fill="#eee" stroke="#999" stroke-width=".5"/><text x="9" y="12" font-size="4" fill="#555">您的LOGO</text>
<rect y="39" width="80" height="46" fill="#4a4a4a"/><rect x="70" y="39" width="150" height="46" fill="#c3251c"/><circle cx="52" cy="61" r="30" fill="#f4f4f4"/>
<g fill="none" stroke-width="4"><path d="M28,52A26,26 0 0 1 38,39" stroke="#e8641e"/><path d="M43,35A27,27 0 0 1 58,34" stroke="#f0a83a"/><path d="M62,36A27,27 0 0 1 74,46" stroke="#1a9a88"/><path d="M76,50A27,27 0 0 1 79,63" stroke="#5a9a6a"/><path d="M78,67A27,27 0 0 1 71,80" stroke="#1a9a88"/><path d="M68,83A28,28 0 0 1 25,66" stroke="#50586a"/></g>
<path d="M36,78L72,54V74Q60,82 40,80Z" fill="#c3251c"/><circle cx="49" cy="46" r="3.6" fill="#c3251c"/><path d="M44,51H54L58,58H54L52,63L57,68H52L46,64L40,68L43,59Z" fill="#c3251c"/>
<text x="89" y="66" font-size="12" font-weight="700" fill="#fff">通用型总结报告模板</text><text x="90" y="51" font-size="4.5" fill="#f0d0c8">本模板有完整的界面及框架，原贴在实用</text><text x="91" y="75" font-size="4.5" fill="#f0d0c8">汇报人：XXX　　20XX年X月</text>
<g fill="#ddd" stroke="#555" stroke-width=".7"><circle cx="166" cy="112" r="4"/><circle cx="177" cy="112" r="4"/><circle cx="187" cy="112" r="4"/><circle cx="198" cy="112" r="4"/><circle cx="209" cy="112" r="4"/></g></svg>
<p>通用型工作总结报告PPT模板</p><div class="m">动态 - 36页</div><div class="v"><svg viewBox="0 0 15 11"><path d="M0,5.5Q7.5,-3 15,5.5Q7.5,14 0,5.5Z" fill="#ccc"/><circle cx="7.5" cy="5.5" r="3" fill="#fff"/><circle cx="7.5" cy="5.5" r="1.8" fill="#ccc"/></svg>38184</div>
</div>

</div>

<!-- section header 2 -->
<div class="sec" style="top:837px">
<h2>PPT图表</h2>
<div class="tags"><a>柱形图</a><a>线形图</a><a>饼状图</a><a>SWOT分析图</a><a>PPT时间轴</a><a>鱼骨图</a><a>流程图</a><a>并列</a><a>层级</a><a>扩散</a><a>构架</a><a>包含</a></div>
<a class="more">更多...</a>
</div>

<div id="sb"></div><div id="sbt"></div><div id="hb"></div>
</body>
</html>
